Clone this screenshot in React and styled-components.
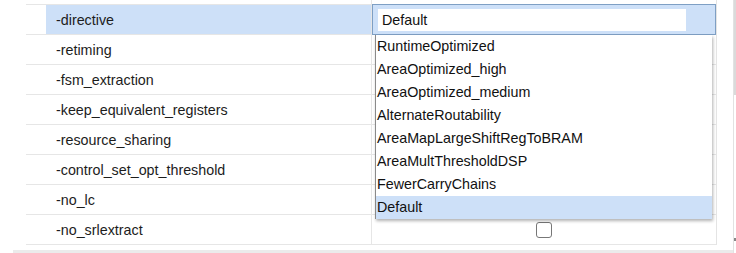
import React from 'react';
import styled, { createGlobalStyle } from 'styled-components';

const GlobalStyle = createGlobalStyle`
  html, body {
    margin: 0;
    padding: 0;
    background: #fff;
  }
  body {
    font-family: "Liberation Sans", Arial, sans-serif;
    color: #1c1c1c;
  }
`;

const Frame = styled.div`
  width: 736px;
  height: 253px;
  overflow: hidden;
  display: flex;
  background: #fff;
`;

const Viewport = styled.div`
  width: 733px;
  display: flex;
  flex-direction: column;
`;

const TableArea = styled.div`
  height: 250px;
  overflow: hidden;
  padding-left: 26px;
`;

const Table = styled.div`
  width: 691px;
  margin-top: -25px;
  border-right: 1px solid #e4e4e4;
  box-sizing: border-box;
`;

const Row = styled.div`
  display: grid;
  grid-template-columns: 20px 326px 1fr;
  height: 30px;
  box-sizing: border-box;
  border-bottom: 1px solid #e6e6e6;
`;

const Indent = styled.div``;

const NameCell = styled.div`
  display: flex;
  align-items: center;
  padding-left: 10px;
  font-size: 14.3px;
  border-right: 1px solid #e6e6e6;
  background: ${({ $selected }) => ($selected ? '#cde0f8' : 'transparent')};
`;

const ValueCell = styled.div`
  position: relative;
  display: flex;
  align-items: center;
  justify-content: center;
  background: ${({ $selected }) => ($selected ? '#cde0f8' : 'transparent')};
`;

const Combo = styled.div`
  position: absolute;
  top: -1px;
  bottom: -1px;
  left: 0;
  right: 0;
  border: 1px solid #7e9fc4;
  display: flex;
  align-items: center;
  padding-left: 5px;
`;

const ComboInput = styled.div`
  width: 304px;
  height: 22px;
  background: #fff;
  padding-left: 4px;
  display: flex;
  align-items: center;
  font-size: 14.3px;
  color: #111;
`;

const Dropdown = styled.ul`
  position: absolute;
  z-index: 10;
  top: 30px;
  left: 3px;
  width: 337px;
  margin: 0;
  padding: 0;
  list-style: none;
  background: #fff;
  border-left: 1px solid #8a8a8a;
  box-sizing: border-box;
  box-shadow: 1px 2px 3px rgba(0, 0, 0, 0.3);
`;

const Option = styled.li`
  height: 23px;
  line-height: 23px;
  padding-left: 1px;
  font-size: 14.3px;
  color: #111;
  white-space: nowrap;
  background: ${({ $active }) => ($active ? '#cde0f8' : 'transparent')};
`;

const Checkbox = styled.span`
  width: 14px;
  height: 14px;
  margin-top: 1px;
  border: 1.5px solid #777;
  border-radius: 3px;
  background: #fff;
`;

const VScroll = styled.div`
  width: 3px;
  display: flex;
  flex-direction: column;
  justify-content: space-between;
  border-left: 1px solid #e2e2e2;
  box-sizing: border-box;
  padding-bottom: 12px;
`;

const VThumb = styled.div`
  height: 95px;
  background: #dadada;
`;

const VArrow = styled.div`
  height: 3px;
  background: #888;
`;

const HScroll = styled.div`
  height: 3px;
  margin-left: 13px;
  background: #ebebeb;
`;

const options = [
  'RuntimeOptimized',
  'AreaOptimized_high',
  'AreaOptimized_medium',
  'AlternateRoutability',
  'AreaMapLargeShiftRegToBRAM',
  'AreaMultThresholdDSP',
  'FewerCarryChains',
  'Default',
];

const flags = [
  '-retiming',
  '-fsm_extraction',
  '-keep_equivalent_registers',
  '-resource_sharing',
  '-control_set_opt_threshold',
  '-no_lc',
  '-no_srlextract',
];

export default function App() {
  return (
    <>
      <GlobalStyle />
      <Frame>
        <Viewport>
          <TableArea>
            <Table>
              <Row>
                <Indent />
                <NameCell />
                <ValueCell />
              </Row>
              <Row>
                <Indent />
                <NameCell $selected>-directive</NameCell>
                <ValueCell $selected>
                  <Combo>
                    <ComboInput>Default</ComboInput>
                  </Combo>
                  <Dropdown>
                    {options.map((o) => (
                      <Option key={o} $active={o === 'Default'}>
                        {o}
                      </Option>
                    ))}
                  </Dropdown>
                </ValueCell>
              </Row>
              {flags.map((f) => (
                <Row key={f}>
                  <Indent />
                  <NameCell>{f}</NameCell>
                  <ValueCell>
                    <Checkbox />
                  </ValueCell>
                </Row>
              ))}
            </Table>
          </TableArea>
          <HScroll />
        </Viewport>
        <VScroll>
          <VThumb />
          <VArrow />
        </VScroll>
      </Frame>
    </>
  );
}
